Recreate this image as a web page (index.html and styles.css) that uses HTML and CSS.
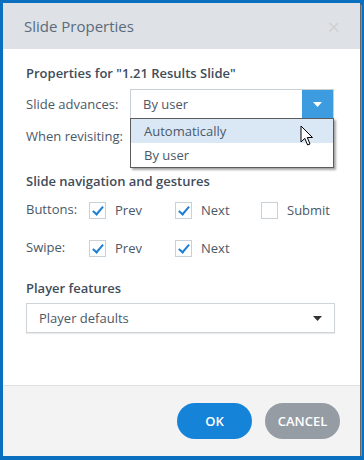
FILE: index.html
```html
<!DOCTYPE html>
<html>
<head>
	<title>Slide Properties</title>
	<link rel="stylesheet" href="styles.css">
</head>
<body>

<div class="dialog">
	<div class="dlgHead">
		<span class="dlgTitle">Slide Properties</span>
		<span class="dlgClose">&times;</span>
	</div>

	<div class="dlgBody">
		<div class="section">Properties for "1.21 Results Slide"</div>

		<div class="row">
			<span class="rowLabel">Slide advances:</span>
			<div class="combo">
				<div class="comboBox">
					<span class="comboText">By user</span>
					<span class="comboBtn">
						<svg width="9" height="5" viewBox="0 0 9 5"><path d="M0 0H9L4.5 5Z" fill="#fff"/></svg>
					</span>
				</div>
				<ul class="comboList">
					<li class="hover">Automatically</li>
					<li>By user</li>
				</ul>
				<svg class="cursor" width="14" height="22" viewBox="0 0 14 22">
					<path d="M1 1V17L4.8 13.4L7.6 20L10 19L7.3 12.5H12.5Z" fill="#fff" stroke="#000" stroke-width="1" stroke-linejoin="round"/>
				</svg>
			</div>
		</div>

		<div class="row">
			<span class="rowLabel">When revisiting:</span>
		</div>

		<div class="section second">Slide navigation and gestures</div>

		<div class="checkRow">
			<span class="checkLabel">Buttons:</span>
			<label class="check"><span class="box on"></span>Prev</label>
			<label class="check"><span class="box on"></span>Next</label>
			<label class="check"><span class="box"></span>Submit</label>
		</div>

		<div class="checkRow">
			<span class="checkLabel">Swipe:</span>
			<label class="check"><span class="box on"></span>Prev</label>
			<label class="check"><span class="box on"></span>Next</label>
		</div>

		<div class="section third">Player features</div>

		<div class="select">
			<span>Player defaults</span>
			<svg width="9" height="5" viewBox="0 0 9 5"><path d="M0 0H9L4.5 5Z" fill="#333"/></svg>
		</div>
	</div>

	<div class="dlgFoot">
		<button class="btn ok">OK</button>
		<button class="btn cancel">CANCEL</button>
	</div>
</div>

</body>
</html>
```

FILE: styles.css
```css
body {
	margin: 0;
	background: #0b6fc0;
	font-family: "Open Sans", "Noto Sans", sans-serif;
	font-size: 13px;
	color: #4b5867;
}
.dialog {
	margin: 3px 0 0 3px;
	width: 357px;
	height: 453px;
	display: flex;
	flex-direction: column;
	background: #fff;
	box-shadow: 1px 1px 0 #6a6a6a, 2px 2px 0 #8a8a8a;
}
.dlgHead {
	height: 46px;
	background: #dee1e5;
	display: flex;
	align-items: center;
	justify-content: space-between;
	padding: 0 20px 0 21px;
}
.dlgTitle {
	font-size: 15px;
	color: #5a6b7c;
}
.dlgClose {
	font-size: 22px;
	color: #cfd1d4;
	line-height: 1;
}
.dlgBody {
	flex: 1;
	padding: 15px 25px 0 23px;
}
.section {
	font-weight: 600;
	color: #3f4c5a;
	line-height: 18px;
	height: 18px;
	margin-bottom: 7px;
}
.section.second {
	margin-top: 21px;
	margin-bottom: 5px;
}
.section.third {
	margin-top: 16px;
	margin-bottom: 6px;
}
.row {
	display: flex;
	align-items: center;
	height: 30px;
	margin-bottom: 2px;
}
.rowLabel {
	width: 104px;
	flex: none;
}
.combo {
	position: relative;
	width: 204px;
}
.comboBox {
	height: 28px;
	border: 1px solid #c9cfd5;
	display: flex;
	align-items: center;
	justify-content: space-between;
}
.comboText {
	padding-left: 12px;
}
.comboBtn {
	width: 31px;
	height: 28px;
	background: #3d9be0;
	display: flex;
	align-items: center;
	justify-content: center;
}
.comboList {
	position: absolute;
	top: 29px;
	left: 0;
	width: 202px;
	margin: 0;
	padding: 0;
	list-style: none;
	background: #fff;
	border: 1px solid #5c5c5c;
	box-shadow: 2px 2px 2px rgba(0,0,0,.35);
}
.comboList li {
	height: 24px;
	line-height: 24px;
	padding-left: 13px;
}
.comboList li.hover {
	background: #dae8f6;
}
.cursor {
	position: absolute;
	left: 170px;
	top: 36px;
}
.checkRow {
	display: flex;
	align-items: center;
	height: 30px;
	margin-bottom: 8px;
}
.checkLabel {
	width: 63px;
	flex: none;
	margin-top: -3px;
}
.check {
	width: 86px;
	flex: none;
	display: flex;
	align-items: center;
	gap: 9px;
}
.box {
	width: 15px;
	height: 15px;
	border: 1px solid #c8d0d8;
	position: relative;
}
.box.on::after {
	content: "";
	position: absolute;
	left: 5px;
	top: 1px;
	width: 4px;
	height: 9px;
	border: solid #1b80d6;
	border-width: 0 2px 2px 0;
	transform: rotate(40deg);
}
.select {
	height: 28px;
	border: 1px solid #cfd4d9;
	display: flex;
	align-items: center;
	justify-content: space-between;
	padding: 0 12px 0 12px;
	box-shadow: 0 1px 1px rgba(0,0,0,.08);
}
.dlgFoot {
	height: 70px;
	border-top: 1px solid #e0e0e0;
	background: #f3f3f3;
	display: flex;
	justify-content: flex-end;
	align-items: center;
	gap: 13px;
	padding-right: 20px;
}
.btn {
	width: 75px;
	height: 36px;
	border: none;
	border-radius: 18px;
	color: #fff;
	font-family: "Open Sans", "Noto Sans", sans-serif;
	font-size: 13px;
	font-weight: 600;
}
.ok {
	background: #1584d8;
}
.cancel {
	background: #959ca3;
}
```
